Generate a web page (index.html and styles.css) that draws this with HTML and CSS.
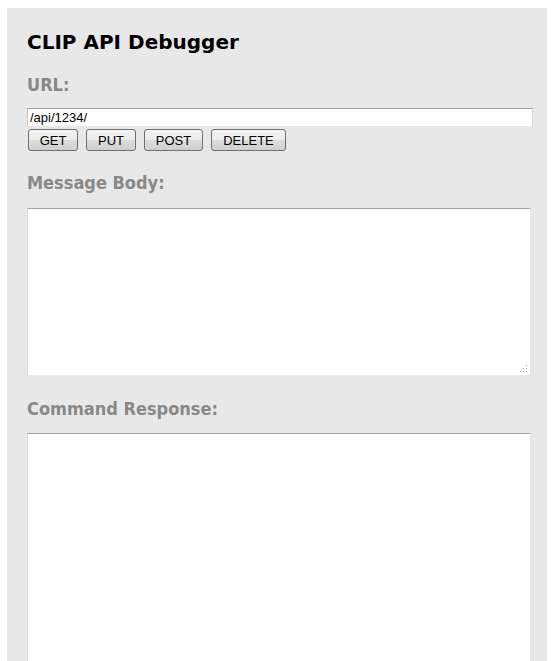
FILE: index.html
```html
<!DOCTYPE html>
<html>
<head>
<meta charset="utf-8">
<title>CLIP API Debugger</title>
<link rel="stylesheet" href="styles.css">
</head>
<body>
<div class="panel">
  <h1 class="title">CLIP API Debugger</h1>
  <h2 class="label label-url">URL:</h2>
  <input class="url" type="text" value="/api/1234/">
  <div class="buttons">
    <button class="btn btn-get">GET</button>
    <button class="btn btn-put">PUT</button>
    <button class="btn btn-post">POST</button>
    <button class="btn btn-delete">DELETE</button>
  </div>
  <h2 class="label label-body">Message Body:</h2>
  <div class="area-wrap area-wrap-body">
    <textarea class="area area-body"></textarea>
    <svg class="grip" width="8" height="8" viewBox="0 0 8 8">
      <rect x="6" y="0" width="1" height="1" fill="#a0a0a0"/>
      <rect x="3" y="3" width="1" height="1" fill="#a0a0a0"/>
      <rect x="6" y="3" width="1" height="1" fill="#a0a0a0"/>
      <rect x="0" y="6" width="1" height="1" fill="#a0a0a0"/>
      <rect x="3" y="6" width="1" height="1" fill="#a0a0a0"/>
      <rect x="6" y="6" width="1" height="1" fill="#a0a0a0"/>
    </svg>
  </div>
  <h2 class="label label-resp">Command Response:</h2>
  <div class="area-wrap area-wrap-resp">
    <textarea class="area area-resp"></textarea>
  </div>
</div>
</body>
</html>
```
FILE: styles.css
```css
html, body {
  margin: 0;
  padding: 0;
  background: #ffffff;
}
body {
  padding: 8px 0 0 7px;
  height: 653px;
  overflow: hidden;
}
.panel {
  width: 520px;
  background: #e8e8e8;
  padding: 22px 0 0 20px;
  height: 700px;
  display: flex;
  flex-direction: column;
  align-items: flex-start;
}
.title {
  margin: 0;
  font-family: "DejaVu Sans", Verdana, sans-serif;
  font-weight: bold;
  font-size: 20px;
  line-height: 24px;
  color: #000;
}
.label {
  margin: 0;
  font-family: "DejaVu Sans Condensed", "DejaVu Sans", Tahoma, sans-serif;
  font-weight: bold;
  font-size: 18px;
  line-height: 22px;
  color: #888888;
}
.label-url { margin-top: 20px; }
.label-body { margin-top: 21px; }
.label-resp { margin-top: 22px; }
.url {
  margin: 12px 0 0 0;
  box-sizing: border-box;
  width: 506px;
  height: 21px;
  padding: 1px 2px;
  border: 1px solid;
  border-color: #a3a3a3 #d9d9d9 #e6e6e6 #c8c8c8;
  background: #fff;
  font-family: "Liberation Sans", Arial, sans-serif;
  font-size: 13px;
  color: #000;
  outline: none;
}
.buttons {
  display: flex;
  gap: 8px;
  margin: 2px 0 0 1px;
}
.btn {
  box-sizing: border-box;
  height: 22px;
  padding: 0;
  border: 1px solid #707070;
  border-radius: 3px;
  background: linear-gradient(#f2f2f2 0%, #ebebeb 50%, #dddddd 51%, #cfcfcf 100%);
  font-family: "Liberation Sans", Arial, sans-serif;
  font-size: 13px;
  color: #000;
}
.btn-get { width: 50px; }
.btn-put { width: 50px; }
.btn-post { width: 59px; }
.btn-delete { width: 75px; }
.area-wrap {
  position: relative;
  margin-top: 14px;
  width: 504px;
}
.area-wrap-resp { margin-top: 13px; }
.area {
  display: block;
  box-sizing: border-box;
  width: 504px;
  margin: 0;
  padding: 2px;
  border: 1px solid;
  border-color: #a6a6a6 #dfe3ea #e6e9ef #d8dbe2;
  background: #fff;
  font-family: "Liberation Mono", monospace;
  font-size: 13px;
  outline: none;
  resize: none;
}
.area-body { height: 168px; }
.area-resp { height: 300px; }
.grip {
  position: absolute;
  right: 3px;
  bottom: 3px;
}
```
